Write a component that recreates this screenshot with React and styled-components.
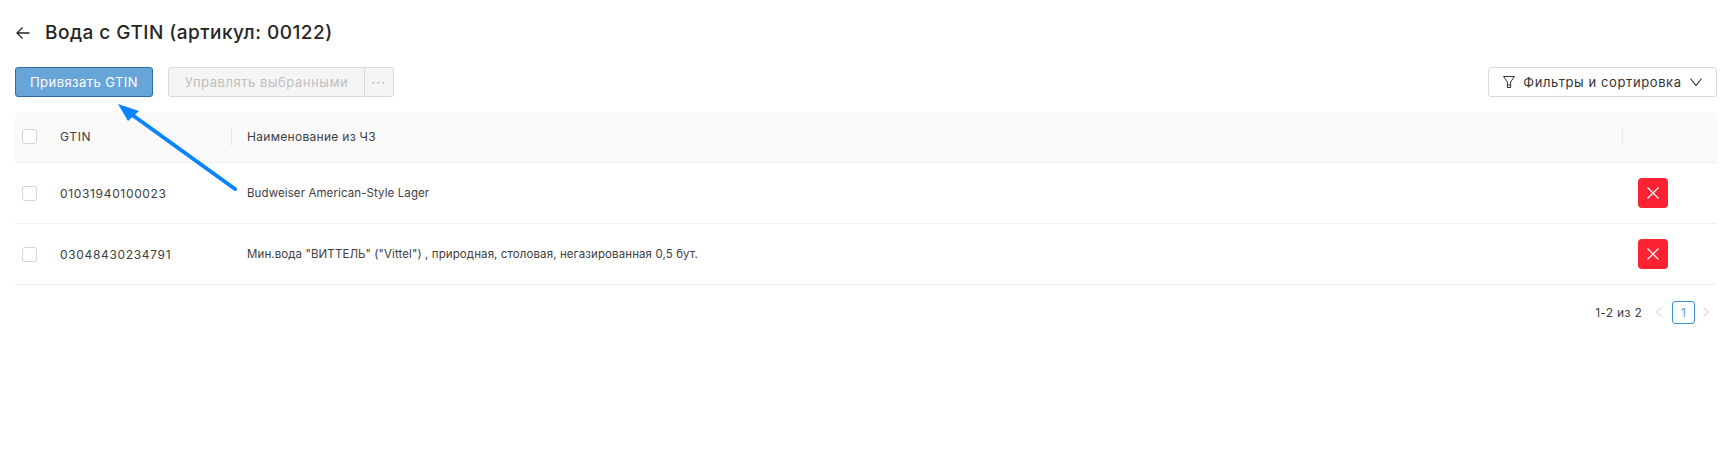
import React from "react";
import styled, {createGlobalStyle} from "styled-components";

const rows = [
  {gtin: "01031940100023", name: "Budweiser American-Style Lager"},
  {gtin: "03048430234791", name: 'Мин.вода "ВИТТЕЛЬ" ("Vittel") , природная, столовая, негазированная 0,5 бут.'},
];

const App = () => (
  <Page>
    <GlobalStyle />
    <TitleRow>
      <svg width="16" height="16" viewBox="0 0 16 16" fill="none" stroke="#262626" strokeWidth="1.3">
        <path d="M14.5 8H2M7.5 2.5L2 8l5.5 5.5" />
      </svg>
      <Title>Вода с GTIN (артикул: 00122)</Title>
    </TitleRow>
    <Toolbar>
      <PrimaryButton>Привязать GTIN</PrimaryButton>
      <ButtonGroup>
        <DisabledButton>Управлять выбранными</DisabledButton>
        <MoreButton>···</MoreButton>
      </ButtonGroup>
      <FilterButton>
        <svg width="14" height="14" viewBox="0 0 14 14" fill="none" stroke="#333" strokeWidth="1">
          <path d="M1.5 1.5h11L8.6 7v5.5H5.4V7zM5.4 10h3.2" />
        </svg>
        Фильтры и сортировка
        <svg width="14" height="14" viewBox="0 0 14 14" fill="none" stroke="#333" strokeWidth="1.1">
          <path d="M1.5 3.5L7 10.5l5.5-7" />
        </svg>
      </FilterButton>
    </Toolbar>
    <Table>
      <HeadRow>
        <CheckCell><Check /></CheckCell>
        <GtinCell>GTIN</GtinCell>
        <NameCell $head>Наименование из ЧЗ</NameCell>
        <ActionCell $head />
      </HeadRow>
      {rows.map(r => (
        <Row key={r.gtin}>
          <CheckCell><Check /></CheckCell>
          <GtinCell>{r.gtin}</GtinCell>
          <NameCell>{r.name}</NameCell>
          <ActionCell>
            <DeleteButton>
              <svg width="14" height="14" viewBox="0 0 14 14" fill="none" stroke="#fff" strokeWidth="1.2">
                <path d="M1.5 1.5l11 11M12.5 1.5l-11 11" />
              </svg>
            </DeleteButton>
          </ActionCell>
        </Row>
      ))}
    </Table>
    <Pagination>
      <Total>1-2 из 2</Total>
      <PageArrow viewBox="0 0 8 12"><path d="M6.5 1.5L1.5 6l5 4.5" /></PageArrow>
      <PageNumber>1</PageNumber>
      <PageArrow viewBox="0 0 8 12"><path d="M1.5 1.5L6.5 6l-5 4.5" /></PageArrow>
    </Pagination>
    <Arrow width="130" height="96" viewBox="0 0 130 96">
      <path d="M124 88L20 13" stroke="#0a84ff" strokeWidth="4" strokeLinecap="round" />
      <path d="M7 3L28 10L17 20Z" fill="#0a84ff" />
    </Arrow>
  </Page>
);
export default App;

const GlobalStyle = createGlobalStyle`
  body {
    margin: 0;
    background: #fff;
    font-family: "Inter", "Noto Sans", sans-serif;
    color: #333;
  }
`;

const Page = styled.div`
  position: relative;
  height: 473px;
  padding: 0 14px 0 15px;
  box-sizing: border-box;
`;

const TitleRow = styled.div`
  display: flex;
  align-items: center;
  gap: 14px;
  height: 67px;
  padding-bottom: 2px;
  box-sizing: border-box;
`;

const Title = styled.h1`
  margin: 0;
  font-size: 19px;
  font-weight: 450;
  color: #262626;
  letter-spacing: 0.47px;
`;

const Toolbar = styled.div`
  display: flex;
  align-items: center;
  height: 30px;
  margin-bottom: 15px;
`;

const BaseButton = styled.div`
  display: flex;
  align-items: center;
  justify-content: center;
  height: 30px;
  box-sizing: border-box;
  border-radius: 3px;
  font-size: 13px;
  letter-spacing: 0.45px;
`;

const PrimaryButton = styled(BaseButton)`
  width: 138px;
  background: #67a5d8;
  border: 1px solid #2e6da4;
  color: #fff;
`;

const ButtonGroup = styled.div`
  display: flex;
  margin-left: 15px;
`;

const DisabledButton = styled(BaseButton)`
  width: 197px;
  background: #f5f5f5;
  border: 1px solid #d9d9d9;
  border-radius: 3px 0 0 3px;
  color: #bfbfbf;
  letter-spacing: 0.55px;
`;

const MoreButton = styled(BaseButton)`
  width: 29px;
  background: #f5f5f5;
  border: 1px solid #d9d9d9;
  border-left: 0;
  border-radius: 0 3px 3px 0;
  color: #a6a6a6;
  letter-spacing: 1.2px;
`;

const FilterButton = styled(BaseButton)`
  width: 229px;
  gap: 7px;
  margin-left: auto;
  background: #fff;
  border: 1px solid #d9d9d9;
  color: #333;
  letter-spacing: 0.6px;
`;

const Table = styled.div`
  font-size: 12px;
  letter-spacing: 0.3px;
  color: #404040;
`;

const Row = styled.div`
  display: flex;
  align-items: center;
  height: 61px;
  border-bottom: 1px solid #efefef;
  box-sizing: border-box;
`;

const HeadRow = styled(Row)`
  height: 51px;
  padding-bottom: 1px;
  background: #fafafa;
  border-radius: 3px 3px 0 0;
`;

const CheckCell = styled.div`
  flex: 0 0 45px;
  padding-left: 7px;
  box-sizing: border-box;
`;

const Check = styled.div`
  width: 15px;
  height: 15px;
  background: #fff;
  border: 1px solid #d4d4d4;
  border-radius: 3px;
  box-sizing: border-box;
`;

const GtinCell = styled.div`
  flex: 0 0 171px;
  box-sizing: border-box;
  font-size: 12px;
  letter-spacing: 0.66px;
`;

const withDivider = `
  &::before {
    content: "";
    position: absolute;
    left: 0;
    top: 50%;
    height: 18px;
    margin-top: -9px;
    border-left: 1px solid #e9e9e9;
  }
`;

const NameCell = styled.div`
  position: relative;
  flex: 1;
  padding-left: 16px;
  ${props => props.$head && withDivider}
  ${props => !props.$head && "font-size: 11.5px; letter-spacing: 0.1px;"}
`;

const ActionCell = styled.div`
  position: relative;
  flex: 0 0 95px;
  padding-left: 16px;
  box-sizing: border-box;
  ${props => props.$head && withDivider}
`;

const DeleteButton = styled.div`
  display: flex;
  align-items: center;
  justify-content: center;
  width: 30px;
  height: 30px;
  background: #fb2332;
  border-radius: 4px;
`;

const Pagination = styled.div`
  display: flex;
  align-items: center;
  justify-content: flex-end;
  height: 22px;
  margin-top: 16px;
  padding-right: 7px;
  font-size: 12px;
`;

const Total = styled.span`
  margin-right: 13px;
  letter-spacing: 0.3px;
  color: #404040;
`;

const PageArrow = styled.svg`
  width: 8px;
  height: 12px;
  fill: none;
  stroke: #c9c9c9;
  stroke-width: 1;
`;

const PageNumber = styled.div`
  display: flex;
  align-items: center;
  justify-content: center;
  width: 23px;
  height: 23px;
  margin: 0 7px 0 9px;
  box-sizing: border-box;
  border: 1px solid #3d8fd1;
  border-radius: 3px;
  color: #5b9bd0;
`;

const Arrow = styled.svg`
  position: absolute;
  left: 111px;
  top: 101px;
`;
